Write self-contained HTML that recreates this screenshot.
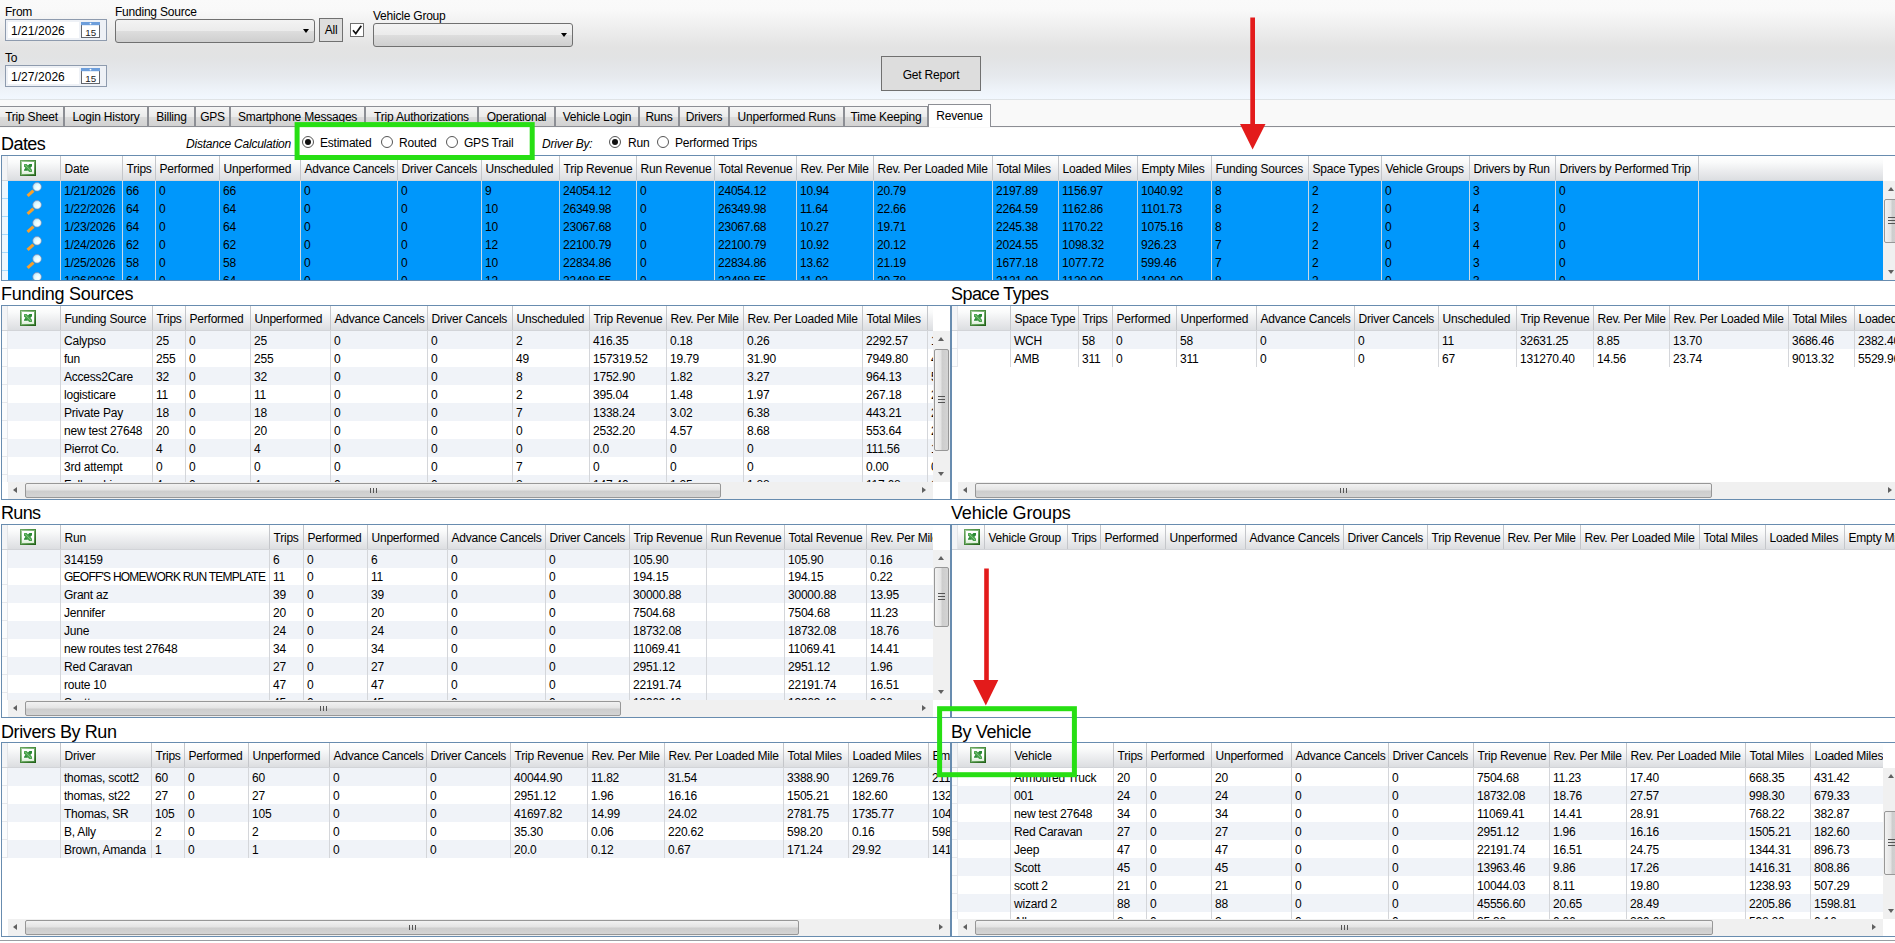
<!DOCTYPE html><html><head><meta charset="utf-8"><title>Revenue Report</title><style>
html,body{margin:0;padding:0;}
body{width:1895px;height:943px;overflow:hidden;background:#fff;position:relative;
 font-family:"Liberation Sans",sans-serif;font-size:12px;color:#000;letter-spacing:-0.22px;}
div,span{box-sizing:border-box;}
.abs{position:absolute;}
#top{position:absolute;left:0;top:0;width:1895px;height:99px;
 background:linear-gradient(to bottom,#fafafa 0px,#f9f9f9 9px,#f3f3f3 20px,#e3e3e3 47px,#e2e3e4 58px,#e6e9ed 76px,#eef3f9 90px,#f2f8ff 99px);}
#tabbg{position:absolute;left:0;top:99px;width:1895px;height:29px;background:#f9f9f9;border-top:1px solid #dfe3e6;}
#tabline{position:absolute;left:0;top:126px;width:1895px;height:1px;background:#8c8e94;}
.tab{position:absolute;top:106px;height:21px;border:1px solid #8c8e94;
 background:linear-gradient(to bottom,#f5f5f5 0%,#ebebeb 50%,#dcdcdc 51%,#d2d2d2 100%);
 line-height:21px;text-align:center;white-space:nowrap;overflow:hidden;font-size:12px;}
.tab.sel{top:104px;height:23px;background:#fff;border-bottom:none;line-height:22px;}
.lbl{position:absolute;white-space:nowrap;line-height:16px;font-size:12px;}
.ttl{position:absolute;white-space:nowrap;font-size:18px;line-height:20px;letter-spacing:-0.45px;}
.it{font-style:italic;}
.datebox{position:absolute;width:102px;height:22px;border:1px solid #8e9bae;background:#eef1f6;}
.datebox .tx{position:absolute;left:2px;top:2px;width:71px;height:16px;background:#fff;line-height:19px;padding-left:3px;font-size:12px;letter-spacing:0.05px;}
.cal{position:absolute;left:75px;top:2px;width:19px;height:16px;}
.combo{position:absolute;height:24px;border:1px solid #707070;border-radius:3px;
 background:linear-gradient(to bottom,#f3f3f3 0%,#ebebeb 50%,#dddddd 51%,#cfcfcf 100%);}
.combo:after{content:"";position:absolute;right:5.5px;top:9px;border:3.5px solid transparent;border-top:4px solid #000;border-bottom:none;}
.btn{position:absolute;border:1px solid #707070;background:#dddddd;text-align:center;font-size:12px;}
.chk{position:absolute;width:14px;height:14px;border:1px solid #707070;background:#fff;}
.radio{position:absolute;width:12px;height:12px;border:1px solid #555;border-radius:50%;background:#fff;}
.radio.on:after{content:"";position:absolute;left:2px;top:2px;width:6px;height:6px;border-radius:50%;background:#111;}

.grid{position:absolute;border:1px solid #688caf;background:#fff;overflow:hidden;}
.hdr{position:absolute;left:0;top:0;height:25px;overflow:hidden;
 background:linear-gradient(to bottom,#ffffff 0%,#fafbfb 25%,#ecedef 60%,#dcdee1 100%);border-bottom:1px solid #d2d4d8;}
.hc{position:absolute;top:0;height:24px;line-height:26px;padding-left:3.5px;white-space:nowrap;overflow:hidden;border-right:1px solid #c4c6ca;}
.rh{position:absolute;left:0;top:0;width:6px;height:24px;background:#f3f4f6;border-right:1px solid #e3e5e8;}
.row{position:absolute;left:0;height:18px;}
.row.alt{background:#f0f3f8;}
.row.selr{background:#0097fb;}
.row .rhc{position:absolute;left:0;top:0;width:6px;height:18px;background:#fbfcfd;border-right:1px solid #e6e8ec;border-bottom:1px solid #e6e8ec;}
.row.selr .rhc{background:#eef7fe;border-right:none;border-bottom:1px solid #a8dafb;}
.c{position:absolute;top:0;height:18px;line-height:21px;padding-left:3px;white-space:nowrap;overflow:hidden;border-right:1px solid #d4d6da;}
.selr .c{border-right:1px solid #c9d9e6;}
.vs{position:absolute;width:17px;background:#f0f0f0;}
.hs{position:absolute;height:17px;background:#f0f0f0;}
.thv{position:absolute;left:1px;width:15px;border:1px solid #979797;border-radius:2px;
 background:linear-gradient(to right,#f2f2f2 0%,#e4e4e4 45%,#cdcdcd 55%,#d4d4d4 100%);}
.thh{position:absolute;top:1px;height:15px;border:1px solid #979797;border-radius:2px;
 background:linear-gradient(to bottom,#f2f2f2 0%,#e4e4e4 45%,#cdcdcd 55%,#d4d4d4 100%);}
.gh{position:absolute;top:4px;width:7px;height:5px;background:linear-gradient(to right,#555 0,#555 1px,transparent 1px,transparent 3px,#555 3px,#555 4px,transparent 4px,transparent 6px,#555 6px,#555 7px);}
.gv{position:absolute;left:3px;width:7px;height:7px;background:linear-gradient(to bottom,#555 0,#555 1px,transparent 1px,transparent 3px,#555 3px,#555 4px,transparent 4px,transparent 6px,#555 6px,#555 7px);}
.ar{position:absolute;width:0;height:0;border:3.5px solid transparent;}
.ar.u{border-bottom:4px solid #606060;border-top:none;}
.ar.d{border-top:4px solid #606060;border-bottom:none;}
.ar.l{border-right:4px solid #606060;border-left:none;}
.ar.r{border-left:4px solid #606060;border-right:none;}
</style></head><body>
<svg width="0" height="0" style="position:absolute"><defs><linearGradient id="xg" x1="0" y1="0" x2="1" y2="1"><stop offset="0" stop-color="#6fa965"/><stop offset="0.5" stop-color="#468a3c"/><stop offset="1" stop-color="#1f5c16"/></linearGradient><linearGradient id="xr" x1="0" y1="0" x2="1" y2="1"><stop offset="0" stop-color="#a6cf9e"/><stop offset="0.5" stop-color="#79b070"/><stop offset="1" stop-color="#3f8236"/></linearGradient><linearGradient id="xw" x1="0" y1="0" x2="0" y2="1"><stop offset="0" stop-color="#ffffff"/><stop offset="0.6" stop-color="#ffffff"/><stop offset="1" stop-color="#dcefd8"/></linearGradient><radialGradient id="mg" cx="0.62" cy="0.62" r="0.75"><stop offset="0" stop-color="#ffffff"/><stop offset="0.55" stop-color="#dcfaff"/><stop offset="1" stop-color="#9fcdf2"/></radialGradient></defs></svg>
<div id="top"></div>
<div class="lbl" style="left:5px;top:4px">From</div>
<div class="datebox" style="left:5px;top:19px"><div class="tx">1/21/2026</div><svg class="cal" width="19" height="16" viewBox="0 0 19 16"><rect x="0.5" y="0.5" width="18" height="15" fill="#fff" stroke="#63666d"/><rect x="0" y="0" width="19" height="3.2" fill="#6d9edb"/><circle cx="9.5" cy="1.6" r="0.9" fill="#fff"/><text x="9.7" y="14.3" font-size="9.8" text-anchor="middle" font-family="Liberation Sans, sans-serif" fill="#222" letter-spacing="0">15</text></svg></div>
<div class="lbl" style="left:5px;top:50px">To</div>
<div class="datebox" style="left:5px;top:65px"><div class="tx">1/27/2026</div><svg class="cal" width="19" height="16" viewBox="0 0 19 16"><rect x="0.5" y="0.5" width="18" height="15" fill="#fff" stroke="#63666d"/><rect x="0" y="0" width="19" height="3.2" fill="#6d9edb"/><circle cx="9.5" cy="1.6" r="0.9" fill="#fff"/><text x="9.7" y="14.3" font-size="9.8" text-anchor="middle" font-family="Liberation Sans, sans-serif" fill="#222" letter-spacing="0">15</text></svg></div>
<div class="lbl" style="left:115px;top:4px">Funding Source</div>
<div class="combo" style="left:115px;top:19px;width:200px"></div>
<div class="btn" style="left:319px;top:18px;width:24px;height:24px;line-height:23px">All</div>
<div class="chk" style="left:350px;top:23px"><svg width="12" height="12" viewBox="0 0 12 12" style="position:absolute;left:0;top:0"><path d="M2 6.2 L4.8 9.5 L10.3 1.8" fill="none" stroke="#111" stroke-width="1.7"/></svg></div>
<div class="lbl" style="left:373px;top:8px">Vehicle Group</div>
<div class="combo" style="left:373px;top:23px;width:200px"></div>
<div class="btn" style="left:881px;top:56px;width:100px;height:35px;line-height:37px">Get Report</div>
<div id="tabbg"></div><div id="tabline"></div>
<div class="tab" style="left:-1px;width:65px">Trip Sheet</div>
<div class="tab" style="left:64px;width:84px">Login History</div>
<div class="tab" style="left:148px;width:47px">Billing</div>
<div class="tab" style="left:195px;width:35px">GPS</div>
<div class="tab" style="left:230px;width:135px">Smartphone Messages</div>
<div class="tab" style="left:365px;width:113px">Trip Authorizations</div>
<div class="tab" style="left:478px;width:77px">Operational</div>
<div class="tab" style="left:555px;width:84px">Vehicle Login</div>
<div class="tab" style="left:639px;width:40px">Runs</div>
<div class="tab" style="left:679px;width:50px">Drivers</div>
<div class="tab" style="left:729px;width:115px">Unperformed Runs</div>
<div class="tab" style="left:844px;width:84px">Time Keeping</div>
<div class="tab sel" style="left:928px;width:63px">Revenue</div>
<div class="ttl" style="left:1px;top:134px;letter-spacing:-0.55px">Dates</div>
<div class="lbl it" style="left:186px;top:136px">Distance Calculation</div>
<div class="radio on" style="left:302px;top:136px"></div><div class="lbl" style="left:320px;top:135px">Estimated</div>
<div class="radio" style="left:381px;top:136px"></div><div class="lbl" style="left:399px;top:135px">Routed</div>
<div class="radio" style="left:446px;top:136px"></div><div class="lbl" style="left:464px;top:135px">GPS Trail</div>
<div class="lbl it" style="left:542px;top:136px">Driver By:</div>
<div class="radio on" style="left:609px;top:136px"></div><div class="lbl" style="left:628px;top:135px">Run</div>
<div class="radio" style="left:657px;top:136px"></div><div class="lbl" style="left:675px;top:135px">Performed Trips</div>
<div class="grid" style="left:1px;top:155px;width:1901px;height:126px">
<div class="abs" style="left:0;top:25px;width:1881px;height:99px;overflow:hidden">
<div class="row selr" style="top:0px;width:1881px"><div class="rhc" style="width:6px"></div>
<div class="c" style="left:6px;width:53px"><svg class="abs" style="left:17px;top:0px" width="18" height="18" viewBox="0 0 18 18"><path d="M3.7 13.9 L7.3 10.6" stroke="#f9a02b" stroke-width="3.1" stroke-linecap="square"/><circle cx="12.05" cy="5.8" r="4.3" fill="url(#mg)" stroke="#8f8aa8" stroke-width="0.6"/></svg></div>
<div class="c" style="left:59px;width:62px">1/21/2026</div>
<div class="c" style="left:121px;width:33px">66</div>
<div class="c" style="left:154px;width:64px">0</div>
<div class="c" style="left:218px;width:81px">66</div>
<div class="c" style="left:299px;width:97px">0</div>
<div class="c" style="left:396px;width:84px">0</div>
<div class="c" style="left:480px;width:78px">9</div>
<div class="c" style="left:558px;width:77px">24054.12</div>
<div class="c" style="left:635px;width:78px">0</div>
<div class="c" style="left:713px;width:82px">24054.12</div>
<div class="c" style="left:795px;width:77px">10.94</div>
<div class="c" style="left:872px;width:119px">20.79</div>
<div class="c" style="left:991px;width:66px">2197.89</div>
<div class="c" style="left:1057px;width:79px">1156.97</div>
<div class="c" style="left:1136px;width:74px">1040.92</div>
<div class="c" style="left:1210px;width:97px">8</div>
<div class="c" style="left:1307px;width:73px">2</div>
<div class="c" style="left:1380px;width:88px">0</div>
<div class="c" style="left:1468px;width:86px">3</div>
<div class="c" style="left:1554px;width:143px">0</div>
</div>
<div class="row selr" style="top:18px;width:1881px"><div class="rhc" style="width:6px"></div>
<div class="c" style="left:6px;width:53px"><svg class="abs" style="left:17px;top:0px" width="18" height="18" viewBox="0 0 18 18"><path d="M3.7 13.9 L7.3 10.6" stroke="#f9a02b" stroke-width="3.1" stroke-linecap="square"/><circle cx="12.05" cy="5.8" r="4.3" fill="url(#mg)" stroke="#8f8aa8" stroke-width="0.6"/></svg></div>
<div class="c" style="left:59px;width:62px">1/22/2026</div>
<div class="c" style="left:121px;width:33px">64</div>
<div class="c" style="left:154px;width:64px">0</div>
<div class="c" style="left:218px;width:81px">64</div>
<div class="c" style="left:299px;width:97px">0</div>
<div class="c" style="left:396px;width:84px">0</div>
<div class="c" style="left:480px;width:78px">10</div>
<div class="c" style="left:558px;width:77px">26349.98</div>
<div class="c" style="left:635px;width:78px">0</div>
<div class="c" style="left:713px;width:82px">26349.98</div>
<div class="c" style="left:795px;width:77px">11.64</div>
<div class="c" style="left:872px;width:119px">22.66</div>
<div class="c" style="left:991px;width:66px">2264.59</div>
<div class="c" style="left:1057px;width:79px">1162.86</div>
<div class="c" style="left:1136px;width:74px">1101.73</div>
<div class="c" style="left:1210px;width:97px">8</div>
<div class="c" style="left:1307px;width:73px">2</div>
<div class="c" style="left:1380px;width:88px">0</div>
<div class="c" style="left:1468px;width:86px">4</div>
<div class="c" style="left:1554px;width:143px">0</div>
</div>
<div class="row selr" style="top:36px;width:1881px"><div class="rhc" style="width:6px"></div>
<div class="c" style="left:6px;width:53px"><svg class="abs" style="left:17px;top:0px" width="18" height="18" viewBox="0 0 18 18"><path d="M3.7 13.9 L7.3 10.6" stroke="#f9a02b" stroke-width="3.1" stroke-linecap="square"/><circle cx="12.05" cy="5.8" r="4.3" fill="url(#mg)" stroke="#8f8aa8" stroke-width="0.6"/></svg></div>
<div class="c" style="left:59px;width:62px">1/23/2026</div>
<div class="c" style="left:121px;width:33px">64</div>
<div class="c" style="left:154px;width:64px">0</div>
<div class="c" style="left:218px;width:81px">64</div>
<div class="c" style="left:299px;width:97px">0</div>
<div class="c" style="left:396px;width:84px">0</div>
<div class="c" style="left:480px;width:78px">10</div>
<div class="c" style="left:558px;width:77px">23067.68</div>
<div class="c" style="left:635px;width:78px">0</div>
<div class="c" style="left:713px;width:82px">23067.68</div>
<div class="c" style="left:795px;width:77px">10.27</div>
<div class="c" style="left:872px;width:119px">19.71</div>
<div class="c" style="left:991px;width:66px">2245.38</div>
<div class="c" style="left:1057px;width:79px">1170.22</div>
<div class="c" style="left:1136px;width:74px">1075.16</div>
<div class="c" style="left:1210px;width:97px">8</div>
<div class="c" style="left:1307px;width:73px">2</div>
<div class="c" style="left:1380px;width:88px">0</div>
<div class="c" style="left:1468px;width:86px">3</div>
<div class="c" style="left:1554px;width:143px">0</div>
</div>
<div class="row selr" style="top:54px;width:1881px"><div class="rhc" style="width:6px"></div>
<div class="c" style="left:6px;width:53px"><svg class="abs" style="left:17px;top:0px" width="18" height="18" viewBox="0 0 18 18"><path d="M3.7 13.9 L7.3 10.6" stroke="#f9a02b" stroke-width="3.1" stroke-linecap="square"/><circle cx="12.05" cy="5.8" r="4.3" fill="url(#mg)" stroke="#8f8aa8" stroke-width="0.6"/></svg></div>
<div class="c" style="left:59px;width:62px">1/24/2026</div>
<div class="c" style="left:121px;width:33px">62</div>
<div class="c" style="left:154px;width:64px">0</div>
<div class="c" style="left:218px;width:81px">62</div>
<div class="c" style="left:299px;width:97px">0</div>
<div class="c" style="left:396px;width:84px">0</div>
<div class="c" style="left:480px;width:78px">12</div>
<div class="c" style="left:558px;width:77px">22100.79</div>
<div class="c" style="left:635px;width:78px">0</div>
<div class="c" style="left:713px;width:82px">22100.79</div>
<div class="c" style="left:795px;width:77px">10.92</div>
<div class="c" style="left:872px;width:119px">20.12</div>
<div class="c" style="left:991px;width:66px">2024.55</div>
<div class="c" style="left:1057px;width:79px">1098.32</div>
<div class="c" style="left:1136px;width:74px">926.23</div>
<div class="c" style="left:1210px;width:97px">7</div>
<div class="c" style="left:1307px;width:73px">2</div>
<div class="c" style="left:1380px;width:88px">0</div>
<div class="c" style="left:1468px;width:86px">4</div>
<div class="c" style="left:1554px;width:143px">0</div>
</div>
<div class="row selr" style="top:72px;width:1881px"><div class="rhc" style="width:6px"></div>
<div class="c" style="left:6px;width:53px"><svg class="abs" style="left:17px;top:0px" width="18" height="18" viewBox="0 0 18 18"><path d="M3.7 13.9 L7.3 10.6" stroke="#f9a02b" stroke-width="3.1" stroke-linecap="square"/><circle cx="12.05" cy="5.8" r="4.3" fill="url(#mg)" stroke="#8f8aa8" stroke-width="0.6"/></svg></div>
<div class="c" style="left:59px;width:62px">1/25/2026</div>
<div class="c" style="left:121px;width:33px">58</div>
<div class="c" style="left:154px;width:64px">0</div>
<div class="c" style="left:218px;width:81px">58</div>
<div class="c" style="left:299px;width:97px">0</div>
<div class="c" style="left:396px;width:84px">0</div>
<div class="c" style="left:480px;width:78px">10</div>
<div class="c" style="left:558px;width:77px">22834.86</div>
<div class="c" style="left:635px;width:78px">0</div>
<div class="c" style="left:713px;width:82px">22834.86</div>
<div class="c" style="left:795px;width:77px">13.62</div>
<div class="c" style="left:872px;width:119px">21.19</div>
<div class="c" style="left:991px;width:66px">1677.18</div>
<div class="c" style="left:1057px;width:79px">1077.72</div>
<div class="c" style="left:1136px;width:74px">599.46</div>
<div class="c" style="left:1210px;width:97px">7</div>
<div class="c" style="left:1307px;width:73px">2</div>
<div class="c" style="left:1380px;width:88px">0</div>
<div class="c" style="left:1468px;width:86px">3</div>
<div class="c" style="left:1554px;width:143px">0</div>
</div>
<div class="row selr" style="top:90px;width:1881px"><div class="rhc" style="width:6px"></div>
<div class="c" style="left:6px;width:53px"><svg class="abs" style="left:17px;top:0px" width="18" height="18" viewBox="0 0 18 18"><path d="M3.7 13.9 L7.3 10.6" stroke="#f9a02b" stroke-width="3.1" stroke-linecap="square"/><circle cx="12.05" cy="5.8" r="4.3" fill="url(#mg)" stroke="#8f8aa8" stroke-width="0.6"/></svg></div>
<div class="c" style="left:59px;width:62px">1/26/2026</div>
<div class="c" style="left:121px;width:33px">64</div>
<div class="c" style="left:154px;width:64px">0</div>
<div class="c" style="left:218px;width:81px">64</div>
<div class="c" style="left:299px;width:97px">0</div>
<div class="c" style="left:396px;width:84px">0</div>
<div class="c" style="left:480px;width:78px">12</div>
<div class="c" style="left:558px;width:77px">22488.55</div>
<div class="c" style="left:635px;width:78px">0</div>
<div class="c" style="left:713px;width:82px">22488.55</div>
<div class="c" style="left:795px;width:77px">11.02</div>
<div class="c" style="left:872px;width:119px">20.78</div>
<div class="c" style="left:991px;width:66px">2121.09</div>
<div class="c" style="left:1057px;width:79px">1120.09</div>
<div class="c" style="left:1136px;width:74px">1001.00</div>
<div class="c" style="left:1210px;width:97px">8</div>
<div class="c" style="left:1307px;width:73px">2</div>
<div class="c" style="left:1380px;width:88px">0</div>
<div class="c" style="left:1468px;width:86px">3</div>
<div class="c" style="left:1554px;width:143px">0</div>
</div>
</div>
<div class="hdr" style="width:1881px">
<div class="rh" style="width:6px"></div>
<div class="hc" style="left:6px;width:53px;padding:0"><svg class="abs" style="left:12px;top:4px" width="16" height="16" viewBox="0 0 16 16"><rect x="0" y="0" width="16" height="16" fill="url(#xg)"/><rect x="1" y="1" width="14" height="14" fill="url(#xr)"/><rect x="2" y="2" width="12" height="12" fill="url(#xw)"/><path d="M9.4 4 H12 V6.2 L7.4 10.8 H4 V9.4 Z" fill="#2b8a35"/><path d="M4 4 H6.6 L12 9.4 V12 H9.2 L4 6.4 Z" fill="#4aa24c"/><path d="M4.8 4.6 L11.2 11.2" stroke="#86c886" stroke-width="0.9"/></svg></div>
<div class="hc" style="left:59px;width:62px">Date</div>
<div class="hc" style="left:121px;width:33px">Trips</div>
<div class="hc" style="left:154px;width:64px">Performed</div>
<div class="hc" style="left:218px;width:81px">Unperformed</div>
<div class="hc" style="left:299px;width:97px">Advance Cancels</div>
<div class="hc" style="left:396px;width:84px">Driver Cancels</div>
<div class="hc" style="left:480px;width:78px">Unscheduled</div>
<div class="hc" style="left:558px;width:77px">Trip Revenue</div>
<div class="hc" style="left:635px;width:78px">Run Revenue</div>
<div class="hc" style="left:713px;width:82px">Total Revenue</div>
<div class="hc" style="left:795px;width:77px">Rev. Per Mile</div>
<div class="hc" style="left:872px;width:119px">Rev. Per Loaded Mile</div>
<div class="hc" style="left:991px;width:66px">Total Miles</div>
<div class="hc" style="left:1057px;width:79px">Loaded Miles</div>
<div class="hc" style="left:1136px;width:74px">Empty Miles</div>
<div class="hc" style="left:1210px;width:97px">Funding Sources</div>
<div class="hc" style="left:1307px;width:73px">Space Types</div>
<div class="hc" style="left:1380px;width:88px">Vehicle Groups</div>
<div class="hc" style="left:1468px;width:86px">Drivers by Run</div>
<div class="hc" style="left:1554px;width:143px">Drivers by Performed Trip</div>
</div>
<div class="vs" style="left:1881px;top:25px;height:99px">
<div class="ar u" style="left:5px;top:6px"></div>
<div class="ar d" style="left:5px;top:89px"></div>
<div class="thv" style="top:18px;height:44px"><div class="gv" style="top:17px"></div></div>
</div>
</div>
<div class="ttl" style="left:1px;top:284px;letter-spacing:-0.26px">Funding Sources</div>
<div class="grid" style="left:1px;top:305px;width:950px;height:195px">
<div class="abs" style="left:0;top:25px;width:931px;height:151px;overflow:hidden">
<div class="row alt" style="top:0px;width:1004px"><div class="rhc" style="width:6px"></div>
<div class="c" style="left:6px;width:53px"></div>
<div class="c" style="left:59px;width:92px">Calypso</div>
<div class="c" style="left:151px;width:33px">25</div>
<div class="c" style="left:184px;width:65px">0</div>
<div class="c" style="left:249px;width:80px">25</div>
<div class="c" style="left:329px;width:97px">0</div>
<div class="c" style="left:426px;width:85px">0</div>
<div class="c" style="left:511px;width:77px">2</div>
<div class="c" style="left:588px;width:77px">416.35</div>
<div class="c" style="left:665px;width:77px">0.18</div>
<div class="c" style="left:742px;width:119px">0.26</div>
<div class="c" style="left:861px;width:65px">2292.57</div>
<div class="c" style="left:926px;width:79px">1</div>
</div>
<div class="row" style="top:18px;width:1004px"><div class="rhc" style="width:6px"></div>
<div class="c" style="left:6px;width:53px"></div>
<div class="c" style="left:59px;width:92px">fun</div>
<div class="c" style="left:151px;width:33px">255</div>
<div class="c" style="left:184px;width:65px">0</div>
<div class="c" style="left:249px;width:80px">255</div>
<div class="c" style="left:329px;width:97px">0</div>
<div class="c" style="left:426px;width:85px">0</div>
<div class="c" style="left:511px;width:77px">49</div>
<div class="c" style="left:588px;width:77px">157319.52</div>
<div class="c" style="left:665px;width:77px">19.79</div>
<div class="c" style="left:742px;width:119px">31.90</div>
<div class="c" style="left:861px;width:65px">7949.80</div>
<div class="c" style="left:926px;width:79px">4</div>
</div>
<div class="row alt" style="top:36px;width:1004px"><div class="rhc" style="width:6px"></div>
<div class="c" style="left:6px;width:53px"></div>
<div class="c" style="left:59px;width:92px">Access2Care</div>
<div class="c" style="left:151px;width:33px">32</div>
<div class="c" style="left:184px;width:65px">0</div>
<div class="c" style="left:249px;width:80px">32</div>
<div class="c" style="left:329px;width:97px">0</div>
<div class="c" style="left:426px;width:85px">0</div>
<div class="c" style="left:511px;width:77px">8</div>
<div class="c" style="left:588px;width:77px">1752.90</div>
<div class="c" style="left:665px;width:77px">1.82</div>
<div class="c" style="left:742px;width:119px">3.27</div>
<div class="c" style="left:861px;width:65px">964.13</div>
<div class="c" style="left:926px;width:79px">5</div>
</div>
<div class="row" style="top:54px;width:1004px"><div class="rhc" style="width:6px"></div>
<div class="c" style="left:6px;width:53px"></div>
<div class="c" style="left:59px;width:92px">logisticare</div>
<div class="c" style="left:151px;width:33px">11</div>
<div class="c" style="left:184px;width:65px">0</div>
<div class="c" style="left:249px;width:80px">11</div>
<div class="c" style="left:329px;width:97px">0</div>
<div class="c" style="left:426px;width:85px">0</div>
<div class="c" style="left:511px;width:77px">2</div>
<div class="c" style="left:588px;width:77px">395.04</div>
<div class="c" style="left:665px;width:77px">1.48</div>
<div class="c" style="left:742px;width:119px">1.97</div>
<div class="c" style="left:861px;width:65px">267.18</div>
<div class="c" style="left:926px;width:79px">2</div>
</div>
<div class="row alt" style="top:72px;width:1004px"><div class="rhc" style="width:6px"></div>
<div class="c" style="left:6px;width:53px"></div>
<div class="c" style="left:59px;width:92px">Private Pay</div>
<div class="c" style="left:151px;width:33px">18</div>
<div class="c" style="left:184px;width:65px">0</div>
<div class="c" style="left:249px;width:80px">18</div>
<div class="c" style="left:329px;width:97px">0</div>
<div class="c" style="left:426px;width:85px">0</div>
<div class="c" style="left:511px;width:77px">7</div>
<div class="c" style="left:588px;width:77px">1338.24</div>
<div class="c" style="left:665px;width:77px">3.02</div>
<div class="c" style="left:742px;width:119px">6.38</div>
<div class="c" style="left:861px;width:65px">443.21</div>
<div class="c" style="left:926px;width:79px">2</div>
</div>
<div class="row" style="top:90px;width:1004px"><div class="rhc" style="width:6px"></div>
<div class="c" style="left:6px;width:53px"></div>
<div class="c" style="left:59px;width:92px">new test 27648</div>
<div class="c" style="left:151px;width:33px">20</div>
<div class="c" style="left:184px;width:65px">0</div>
<div class="c" style="left:249px;width:80px">20</div>
<div class="c" style="left:329px;width:97px">0</div>
<div class="c" style="left:426px;width:85px">0</div>
<div class="c" style="left:511px;width:77px">0</div>
<div class="c" style="left:588px;width:77px">2532.20</div>
<div class="c" style="left:665px;width:77px">4.57</div>
<div class="c" style="left:742px;width:119px">8.68</div>
<div class="c" style="left:861px;width:65px">553.64</div>
<div class="c" style="left:926px;width:79px">2</div>
</div>
<div class="row alt" style="top:108px;width:1004px"><div class="rhc" style="width:6px"></div>
<div class="c" style="left:6px;width:53px"></div>
<div class="c" style="left:59px;width:92px">Pierrot Co.</div>
<div class="c" style="left:151px;width:33px">4</div>
<div class="c" style="left:184px;width:65px">0</div>
<div class="c" style="left:249px;width:80px">4</div>
<div class="c" style="left:329px;width:97px">0</div>
<div class="c" style="left:426px;width:85px">0</div>
<div class="c" style="left:511px;width:77px">0</div>
<div class="c" style="left:588px;width:77px">0.0</div>
<div class="c" style="left:665px;width:77px">0</div>
<div class="c" style="left:742px;width:119px">0</div>
<div class="c" style="left:861px;width:65px">111.56</div>
<div class="c" style="left:926px;width:79px">1</div>
</div>
<div class="row" style="top:126px;width:1004px"><div class="rhc" style="width:6px"></div>
<div class="c" style="left:6px;width:53px"></div>
<div class="c" style="left:59px;width:92px">3rd attempt</div>
<div class="c" style="left:151px;width:33px">0</div>
<div class="c" style="left:184px;width:65px">0</div>
<div class="c" style="left:249px;width:80px">0</div>
<div class="c" style="left:329px;width:97px">0</div>
<div class="c" style="left:426px;width:85px">0</div>
<div class="c" style="left:511px;width:77px">7</div>
<div class="c" style="left:588px;width:77px">0</div>
<div class="c" style="left:665px;width:77px">0</div>
<div class="c" style="left:742px;width:119px">0</div>
<div class="c" style="left:861px;width:65px">0.00</div>
<div class="c" style="left:926px;width:79px">0</div>
</div>
<div class="row alt" style="top:144px;width:1004px"><div class="rhc" style="width:6px"></div>
<div class="c" style="left:6px;width:53px"></div>
<div class="c" style="left:59px;width:92px">Fellowship</div>
<div class="c" style="left:151px;width:33px">4</div>
<div class="c" style="left:184px;width:65px">0</div>
<div class="c" style="left:249px;width:80px">4</div>
<div class="c" style="left:329px;width:97px">0</div>
<div class="c" style="left:426px;width:85px">0</div>
<div class="c" style="left:511px;width:77px">2</div>
<div class="c" style="left:588px;width:77px">147.40</div>
<div class="c" style="left:665px;width:77px">1.25</div>
<div class="c" style="left:742px;width:119px">1.88</div>
<div class="c" style="left:861px;width:65px">117.68</div>
<div class="c" style="left:926px;width:79px">1</div>
</div>
</div>
<div class="hdr" style="width:931px">
<div class="rh" style="width:6px"></div>
<div class="hc" style="left:6px;width:53px;padding:0"><svg class="abs" style="left:12px;top:4px" width="16" height="16" viewBox="0 0 16 16"><rect x="0" y="0" width="16" height="16" fill="url(#xg)"/><rect x="1" y="1" width="14" height="14" fill="url(#xr)"/><rect x="2" y="2" width="12" height="12" fill="url(#xw)"/><path d="M9.4 4 H12 V6.2 L7.4 10.8 H4 V9.4 Z" fill="#2b8a35"/><path d="M4 4 H6.6 L12 9.4 V12 H9.2 L4 6.4 Z" fill="#4aa24c"/><path d="M4.8 4.6 L11.2 11.2" stroke="#86c886" stroke-width="0.9"/></svg></div>
<div class="hc" style="left:59px;width:92px">Funding Source</div>
<div class="hc" style="left:151px;width:33px">Trips</div>
<div class="hc" style="left:184px;width:65px">Performed</div>
<div class="hc" style="left:249px;width:80px">Unperformed</div>
<div class="hc" style="left:329px;width:97px">Advance Cancels</div>
<div class="hc" style="left:426px;width:85px">Driver Cancels</div>
<div class="hc" style="left:511px;width:77px">Unscheduled</div>
<div class="hc" style="left:588px;width:77px">Trip Revenue</div>
<div class="hc" style="left:665px;width:77px">Rev. Per Mile</div>
<div class="hc" style="left:742px;width:119px">Rev. Per Loaded Mile</div>
<div class="hc" style="left:861px;width:65px">Total Miles</div>
<div class="hc" style="left:926px;width:79px"></div>
</div>
<div class="vs" style="left:931px;top:25px;height:151px">
<div class="ar u" style="left:5px;top:6px"></div>
<div class="ar d" style="left:5px;top:141px"></div>
<div class="thv" style="top:18px;height:102px"><div class="gv" style="top:46px"></div></div>
</div>
<div class="hs" style="left:6px;top:176px;width:925px">
<div class="ar l" style="left:5px;top:5px"></div>
<div class="ar r" style="left:914px;top:5px"></div>
<div class="thh" style="left:17px;width:696px"><div class="gh" style="left:344px"></div></div>
</div>
</div>
<div class="ttl" style="left:951px;top:284px;letter-spacing:-0.57px">Space Types</div>
<div class="grid" style="left:951px;top:305px;width:950px;height:195px">
<div class="abs" style="left:0;top:25px;width:949px;height:151px;overflow:hidden">
<div class="row alt" style="top:0px;width:981px"><div class="rhc" style="width:6px"></div>
<div class="c" style="left:6px;width:53px"></div>
<div class="c" style="left:59px;width:68px">WCH</div>
<div class="c" style="left:127px;width:34px">58</div>
<div class="c" style="left:161px;width:64px">0</div>
<div class="c" style="left:225px;width:80px">58</div>
<div class="c" style="left:305px;width:98px">0</div>
<div class="c" style="left:403px;width:84px">0</div>
<div class="c" style="left:487px;width:78px">11</div>
<div class="c" style="left:565px;width:77px">32631.25</div>
<div class="c" style="left:642px;width:76px">8.85</div>
<div class="c" style="left:718px;width:119px">13.70</div>
<div class="c" style="left:837px;width:66px">3686.46</div>
<div class="c" style="left:903px;width:79px">2382.40</div>
</div>
<div class="row" style="top:18px;width:981px"><div class="rhc" style="width:6px"></div>
<div class="c" style="left:6px;width:53px"></div>
<div class="c" style="left:59px;width:68px">AMB</div>
<div class="c" style="left:127px;width:34px">311</div>
<div class="c" style="left:161px;width:64px">0</div>
<div class="c" style="left:225px;width:80px">311</div>
<div class="c" style="left:305px;width:98px">0</div>
<div class="c" style="left:403px;width:84px">0</div>
<div class="c" style="left:487px;width:78px">67</div>
<div class="c" style="left:565px;width:77px">131270.40</div>
<div class="c" style="left:642px;width:76px">14.56</div>
<div class="c" style="left:718px;width:119px">23.74</div>
<div class="c" style="left:837px;width:66px">9013.32</div>
<div class="c" style="left:903px;width:79px">5529.96</div>
</div>
</div>
<div class="hdr" style="width:949px">
<div class="rh" style="width:6px"></div>
<div class="hc" style="left:6px;width:53px;padding:0"><svg class="abs" style="left:12px;top:4px" width="16" height="16" viewBox="0 0 16 16"><rect x="0" y="0" width="16" height="16" fill="url(#xg)"/><rect x="1" y="1" width="14" height="14" fill="url(#xr)"/><rect x="2" y="2" width="12" height="12" fill="url(#xw)"/><path d="M9.4 4 H12 V6.2 L7.4 10.8 H4 V9.4 Z" fill="#2b8a35"/><path d="M4 4 H6.6 L12 9.4 V12 H9.2 L4 6.4 Z" fill="#4aa24c"/><path d="M4.8 4.6 L11.2 11.2" stroke="#86c886" stroke-width="0.9"/></svg></div>
<div class="hc" style="left:59px;width:68px">Space Type</div>
<div class="hc" style="left:127px;width:34px">Trips</div>
<div class="hc" style="left:161px;width:64px">Performed</div>
<div class="hc" style="left:225px;width:80px">Unperformed</div>
<div class="hc" style="left:305px;width:98px">Advance Cancels</div>
<div class="hc" style="left:403px;width:84px">Driver Cancels</div>
<div class="hc" style="left:487px;width:78px">Unscheduled</div>
<div class="hc" style="left:565px;width:77px">Trip Revenue</div>
<div class="hc" style="left:642px;width:76px">Rev. Per Mile</div>
<div class="hc" style="left:718px;width:119px">Rev. Per Loaded Mile</div>
<div class="hc" style="left:837px;width:66px">Total Miles</div>
<div class="hc" style="left:903px;width:79px">Loaded Miles</div>
</div>
<div class="hs" style="left:6px;top:176px;width:943px">
<div class="ar l" style="left:5px;top:5px"></div>
<div class="ar r" style="left:930px;top:5px"></div>
<div class="thh" style="left:17px;width:737px"><div class="gh" style="left:364px"></div></div>
</div>
</div>
<div class="ttl" style="left:1px;top:503px;letter-spacing:-0.68px">Runs</div>
<div class="grid" style="left:1px;top:524px;width:950px;height:194px">
<div class="abs" style="left:0;top:25px;width:931px;height:150px;overflow:hidden">
<div class="row alt" style="top:0px;width:941px"><div class="rhc" style="width:6px"></div>
<div class="c" style="left:6px;width:53px"></div>
<div class="c" style="left:59px;width:209px">314159</div>
<div class="c" style="left:268px;width:34px">6</div>
<div class="c" style="left:302px;width:64px">0</div>
<div class="c" style="left:366px;width:80px">6</div>
<div class="c" style="left:446px;width:98px">0</div>
<div class="c" style="left:544px;width:84px">0</div>
<div class="c" style="left:628px;width:77px">105.90</div>
<div class="c" style="left:705px;width:78px"></div>
<div class="c" style="left:783px;width:82px">105.90</div>
<div class="c" style="left:865px;width:77px">0.16</div>
</div>
<div class="row" style="top:17px;width:941px"><div class="rhc" style="width:6px"></div>
<div class="c" style="left:6px;width:53px"></div>
<div class="c" style="left:59px;width:209px"><span style="letter-spacing:-0.76px">GEOFF'S HOMEWORK RUN TEMPLATE</span></div>
<div class="c" style="left:268px;width:34px">11</div>
<div class="c" style="left:302px;width:64px">0</div>
<div class="c" style="left:366px;width:80px">11</div>
<div class="c" style="left:446px;width:98px">0</div>
<div class="c" style="left:544px;width:84px">0</div>
<div class="c" style="left:628px;width:77px">194.15</div>
<div class="c" style="left:705px;width:78px"></div>
<div class="c" style="left:783px;width:82px">194.15</div>
<div class="c" style="left:865px;width:77px">0.22</div>
</div>
<div class="row alt" style="top:35px;width:941px"><div class="rhc" style="width:6px"></div>
<div class="c" style="left:6px;width:53px"></div>
<div class="c" style="left:59px;width:209px">Grant az</div>
<div class="c" style="left:268px;width:34px">39</div>
<div class="c" style="left:302px;width:64px">0</div>
<div class="c" style="left:366px;width:80px">39</div>
<div class="c" style="left:446px;width:98px">0</div>
<div class="c" style="left:544px;width:84px">0</div>
<div class="c" style="left:628px;width:77px">30000.88</div>
<div class="c" style="left:705px;width:78px"></div>
<div class="c" style="left:783px;width:82px">30000.88</div>
<div class="c" style="left:865px;width:77px">13.95</div>
</div>
<div class="row" style="top:53px;width:941px"><div class="rhc" style="width:6px"></div>
<div class="c" style="left:6px;width:53px"></div>
<div class="c" style="left:59px;width:209px">Jennifer</div>
<div class="c" style="left:268px;width:34px">20</div>
<div class="c" style="left:302px;width:64px">0</div>
<div class="c" style="left:366px;width:80px">20</div>
<div class="c" style="left:446px;width:98px">0</div>
<div class="c" style="left:544px;width:84px">0</div>
<div class="c" style="left:628px;width:77px">7504.68</div>
<div class="c" style="left:705px;width:78px"></div>
<div class="c" style="left:783px;width:82px">7504.68</div>
<div class="c" style="left:865px;width:77px">11.23</div>
</div>
<div class="row alt" style="top:71px;width:941px"><div class="rhc" style="width:6px"></div>
<div class="c" style="left:6px;width:53px"></div>
<div class="c" style="left:59px;width:209px">June</div>
<div class="c" style="left:268px;width:34px">24</div>
<div class="c" style="left:302px;width:64px">0</div>
<div class="c" style="left:366px;width:80px">24</div>
<div class="c" style="left:446px;width:98px">0</div>
<div class="c" style="left:544px;width:84px">0</div>
<div class="c" style="left:628px;width:77px">18732.08</div>
<div class="c" style="left:705px;width:78px"></div>
<div class="c" style="left:783px;width:82px">18732.08</div>
<div class="c" style="left:865px;width:77px">18.76</div>
</div>
<div class="row" style="top:89px;width:941px"><div class="rhc" style="width:6px"></div>
<div class="c" style="left:6px;width:53px"></div>
<div class="c" style="left:59px;width:209px">new routes test 27648</div>
<div class="c" style="left:268px;width:34px">34</div>
<div class="c" style="left:302px;width:64px">0</div>
<div class="c" style="left:366px;width:80px">34</div>
<div class="c" style="left:446px;width:98px">0</div>
<div class="c" style="left:544px;width:84px">0</div>
<div class="c" style="left:628px;width:77px">11069.41</div>
<div class="c" style="left:705px;width:78px"></div>
<div class="c" style="left:783px;width:82px">11069.41</div>
<div class="c" style="left:865px;width:77px">14.41</div>
</div>
<div class="row alt" style="top:107px;width:941px"><div class="rhc" style="width:6px"></div>
<div class="c" style="left:6px;width:53px"></div>
<div class="c" style="left:59px;width:209px">Red Caravan</div>
<div class="c" style="left:268px;width:34px">27</div>
<div class="c" style="left:302px;width:64px">0</div>
<div class="c" style="left:366px;width:80px">27</div>
<div class="c" style="left:446px;width:98px">0</div>
<div class="c" style="left:544px;width:84px">0</div>
<div class="c" style="left:628px;width:77px">2951.12</div>
<div class="c" style="left:705px;width:78px"></div>
<div class="c" style="left:783px;width:82px">2951.12</div>
<div class="c" style="left:865px;width:77px">1.96</div>
</div>
<div class="row" style="top:125px;width:941px"><div class="rhc" style="width:6px"></div>
<div class="c" style="left:6px;width:53px"></div>
<div class="c" style="left:59px;width:209px">route 10</div>
<div class="c" style="left:268px;width:34px">47</div>
<div class="c" style="left:302px;width:64px">0</div>
<div class="c" style="left:366px;width:80px">47</div>
<div class="c" style="left:446px;width:98px">0</div>
<div class="c" style="left:544px;width:84px">0</div>
<div class="c" style="left:628px;width:77px">22191.74</div>
<div class="c" style="left:705px;width:78px"></div>
<div class="c" style="left:783px;width:82px">22191.74</div>
<div class="c" style="left:865px;width:77px">16.51</div>
</div>
<div class="row alt" style="top:143px;width:941px"><div class="rhc" style="width:6px"></div>
<div class="c" style="left:6px;width:53px"></div>
<div class="c" style="left:59px;width:209px">Scott</div>
<div class="c" style="left:268px;width:34px">45</div>
<div class="c" style="left:302px;width:64px">0</div>
<div class="c" style="left:366px;width:80px">45</div>
<div class="c" style="left:446px;width:98px">0</div>
<div class="c" style="left:544px;width:84px">0</div>
<div class="c" style="left:628px;width:77px">13963.46</div>
<div class="c" style="left:705px;width:78px"></div>
<div class="c" style="left:783px;width:82px">13963.46</div>
<div class="c" style="left:865px;width:77px">9.86</div>
</div>
</div>
<div class="hdr" style="width:931px">
<div class="rh" style="width:6px"></div>
<div class="hc" style="left:6px;width:53px;padding:0"><svg class="abs" style="left:12px;top:4px" width="16" height="16" viewBox="0 0 16 16"><rect x="0" y="0" width="16" height="16" fill="url(#xg)"/><rect x="1" y="1" width="14" height="14" fill="url(#xr)"/><rect x="2" y="2" width="12" height="12" fill="url(#xw)"/><path d="M9.4 4 H12 V6.2 L7.4 10.8 H4 V9.4 Z" fill="#2b8a35"/><path d="M4 4 H6.6 L12 9.4 V12 H9.2 L4 6.4 Z" fill="#4aa24c"/><path d="M4.8 4.6 L11.2 11.2" stroke="#86c886" stroke-width="0.9"/></svg></div>
<div class="hc" style="left:59px;width:209px">Run</div>
<div class="hc" style="left:268px;width:34px">Trips</div>
<div class="hc" style="left:302px;width:64px">Performed</div>
<div class="hc" style="left:366px;width:80px">Unperformed</div>
<div class="hc" style="left:446px;width:98px">Advance Cancels</div>
<div class="hc" style="left:544px;width:84px">Driver Cancels</div>
<div class="hc" style="left:628px;width:77px">Trip Revenue</div>
<div class="hc" style="left:705px;width:78px">Run Revenue</div>
<div class="hc" style="left:783px;width:82px">Total Revenue</div>
<div class="hc" style="left:865px;width:77px">Rev. Per Mile</div>
</div>
<div class="vs" style="left:931px;top:25px;height:150px">
<div class="ar u" style="left:5px;top:6px"></div>
<div class="ar d" style="left:5px;top:140px"></div>
<div class="thv" style="top:17px;height:60px"><div class="gv" style="top:25px"></div></div>
</div>
<div class="hs" style="left:6px;top:175px;width:925px">
<div class="ar l" style="left:5px;top:5px"></div>
<div class="ar r" style="left:914px;top:5px"></div>
<div class="thh" style="left:17px;width:596px"><div class="gh" style="left:294px"></div></div>
</div>
</div>
<div class="ttl" style="left:951px;top:503px;letter-spacing:-0.18px">Vehicle Groups</div>
<div class="grid" style="left:951px;top:524px;width:950px;height:194px">
<div class="abs" style="left:0;top:25px;width:949px;height:167px;overflow:hidden">
</div>
<div class="hdr" style="width:949px">
<div class="rh" style="width:6px"></div>
<div class="hc" style="left:6px;width:27px;padding:0"><svg class="abs" style="left:6px;top:4px" width="16" height="16" viewBox="0 0 16 16"><rect x="0" y="0" width="16" height="16" fill="url(#xg)"/><rect x="1" y="1" width="14" height="14" fill="url(#xr)"/><rect x="2" y="2" width="12" height="12" fill="url(#xw)"/><path d="M9.4 4 H12 V6.2 L7.4 10.8 H4 V9.4 Z" fill="#2b8a35"/><path d="M4 4 H6.6 L12 9.4 V12 H9.2 L4 6.4 Z" fill="#4aa24c"/><path d="M4.8 4.6 L11.2 11.2" stroke="#86c886" stroke-width="0.9"/></svg></div>
<div class="hc" style="left:33px;width:83px">Vehicle Group</div>
<div class="hc" style="left:116px;width:33px">Trips</div>
<div class="hc" style="left:149px;width:65px">Performed</div>
<div class="hc" style="left:214px;width:80px">Unperformed</div>
<div class="hc" style="left:294px;width:98px">Advance Cancels</div>
<div class="hc" style="left:392px;width:84px">Driver Cancels</div>
<div class="hc" style="left:476px;width:76px">Trip Revenue</div>
<div class="hc" style="left:552px;width:77px">Rev. Per Mile</div>
<div class="hc" style="left:629px;width:119px">Rev. Per Loaded Mile</div>
<div class="hc" style="left:748px;width:66px">Total Miles</div>
<div class="hc" style="left:814px;width:79px">Loaded Miles</div>
<div class="hc" style="left:893px;width:76px">Empty Miles</div>
</div>
</div>
<div class="ttl" style="left:1px;top:722px;letter-spacing:-0.39px">Drivers By Run</div>
<div class="grid" style="left:1px;top:742px;width:950px;height:195px">
<div class="abs" style="left:0;top:25px;width:948px;height:151px;overflow:hidden">
<div class="row alt" style="top:0px;width:1001px"><div class="rhc" style="width:6px"></div>
<div class="c" style="left:6px;width:53px"></div>
<div class="c" style="left:59px;width:91px">thomas, scott2</div>
<div class="c" style="left:150px;width:33px">60</div>
<div class="c" style="left:183px;width:64px">0</div>
<div class="c" style="left:247px;width:81px">60</div>
<div class="c" style="left:328px;width:97px">0</div>
<div class="c" style="left:425px;width:84px">0</div>
<div class="c" style="left:509px;width:77px">40044.90</div>
<div class="c" style="left:586px;width:77px">11.82</div>
<div class="c" style="left:663px;width:119px">31.54</div>
<div class="c" style="left:782px;width:65px">3388.90</div>
<div class="c" style="left:847px;width:80px">1269.76</div>
<div class="c" style="left:927px;width:75px">2119.14</div>
</div>
<div class="row" style="top:18px;width:1001px"><div class="rhc" style="width:6px"></div>
<div class="c" style="left:6px;width:53px"></div>
<div class="c" style="left:59px;width:91px">thomas, st22</div>
<div class="c" style="left:150px;width:33px">27</div>
<div class="c" style="left:183px;width:64px">0</div>
<div class="c" style="left:247px;width:81px">27</div>
<div class="c" style="left:328px;width:97px">0</div>
<div class="c" style="left:425px;width:84px">0</div>
<div class="c" style="left:509px;width:77px">2951.12</div>
<div class="c" style="left:586px;width:77px">1.96</div>
<div class="c" style="left:663px;width:119px">16.16</div>
<div class="c" style="left:782px;width:65px">1505.21</div>
<div class="c" style="left:847px;width:80px">182.60</div>
<div class="c" style="left:927px;width:75px">1322.61</div>
</div>
<div class="row alt" style="top:36px;width:1001px"><div class="rhc" style="width:6px"></div>
<div class="c" style="left:6px;width:53px"></div>
<div class="c" style="left:59px;width:91px">Thomas, SR</div>
<div class="c" style="left:150px;width:33px">105</div>
<div class="c" style="left:183px;width:64px">0</div>
<div class="c" style="left:247px;width:81px">105</div>
<div class="c" style="left:328px;width:97px">0</div>
<div class="c" style="left:425px;width:84px">0</div>
<div class="c" style="left:509px;width:77px">41697.82</div>
<div class="c" style="left:586px;width:77px">14.99</div>
<div class="c" style="left:663px;width:119px">24.02</div>
<div class="c" style="left:782px;width:65px">2781.75</div>
<div class="c" style="left:847px;width:80px">1735.77</div>
<div class="c" style="left:927px;width:75px">1045.98</div>
</div>
<div class="row" style="top:54px;width:1001px"><div class="rhc" style="width:6px"></div>
<div class="c" style="left:6px;width:53px"></div>
<div class="c" style="left:59px;width:91px">B, Ally</div>
<div class="c" style="left:150px;width:33px">2</div>
<div class="c" style="left:183px;width:64px">0</div>
<div class="c" style="left:247px;width:81px">2</div>
<div class="c" style="left:328px;width:97px">0</div>
<div class="c" style="left:425px;width:84px">0</div>
<div class="c" style="left:509px;width:77px">35.30</div>
<div class="c" style="left:586px;width:77px">0.06</div>
<div class="c" style="left:663px;width:119px">220.62</div>
<div class="c" style="left:782px;width:65px">598.20</div>
<div class="c" style="left:847px;width:80px">0.16</div>
<div class="c" style="left:927px;width:75px">598.04</div>
</div>
<div class="row alt" style="top:72px;width:1001px"><div class="rhc" style="width:6px"></div>
<div class="c" style="left:6px;width:53px"></div>
<div class="c" style="left:59px;width:91px">Brown, Amanda</div>
<div class="c" style="left:150px;width:33px">1</div>
<div class="c" style="left:183px;width:64px">0</div>
<div class="c" style="left:247px;width:81px">1</div>
<div class="c" style="left:328px;width:97px">0</div>
<div class="c" style="left:425px;width:84px">0</div>
<div class="c" style="left:509px;width:77px">20.0</div>
<div class="c" style="left:586px;width:77px">0.12</div>
<div class="c" style="left:663px;width:119px">0.67</div>
<div class="c" style="left:782px;width:65px">171.24</div>
<div class="c" style="left:847px;width:80px">29.92</div>
<div class="c" style="left:927px;width:75px">141.32</div>
</div>
</div>
<div class="hdr" style="width:948px">
<div class="rh" style="width:6px"></div>
<div class="hc" style="left:6px;width:53px;padding:0"><svg class="abs" style="left:12px;top:4px" width="16" height="16" viewBox="0 0 16 16"><rect x="0" y="0" width="16" height="16" fill="url(#xg)"/><rect x="1" y="1" width="14" height="14" fill="url(#xr)"/><rect x="2" y="2" width="12" height="12" fill="url(#xw)"/><path d="M9.4 4 H12 V6.2 L7.4 10.8 H4 V9.4 Z" fill="#2b8a35"/><path d="M4 4 H6.6 L12 9.4 V12 H9.2 L4 6.4 Z" fill="#4aa24c"/><path d="M4.8 4.6 L11.2 11.2" stroke="#86c886" stroke-width="0.9"/></svg></div>
<div class="hc" style="left:59px;width:91px">Driver</div>
<div class="hc" style="left:150px;width:33px">Trips</div>
<div class="hc" style="left:183px;width:64px">Performed</div>
<div class="hc" style="left:247px;width:81px">Unperformed</div>
<div class="hc" style="left:328px;width:97px">Advance Cancels</div>
<div class="hc" style="left:425px;width:84px">Driver Cancels</div>
<div class="hc" style="left:509px;width:77px">Trip Revenue</div>
<div class="hc" style="left:586px;width:77px">Rev. Per Mile</div>
<div class="hc" style="left:663px;width:119px">Rev. Per Loaded Mile</div>
<div class="hc" style="left:782px;width:65px">Total Miles</div>
<div class="hc" style="left:847px;width:80px">Loaded Miles</div>
<div class="hc" style="left:927px;width:75px">Empty Miles</div>
</div>
<div class="hs" style="left:6px;top:176px;width:942px">
<div class="ar l" style="left:5px;top:5px"></div>
<div class="ar r" style="left:931px;top:5px"></div>
<div class="thh" style="left:17px;width:774px"><div class="gh" style="left:383px"></div></div>
</div>
</div>
<div class="ttl" style="left:951px;top:722px;letter-spacing:-0.40px">By Vehicle</div>
<div class="grid" style="left:951px;top:742px;width:950px;height:195px">
<div class="abs" style="left:0;top:25px;width:931px;height:151px;overflow:hidden">
<div class="row" style="top:0px;width:938px"><div class="rhc" style="width:6px"></div>
<div class="c" style="left:6px;width:53px"></div>
<div class="c" style="left:59px;width:103px">Armoured Truck</div>
<div class="c" style="left:162px;width:33px">20</div>
<div class="c" style="left:195px;width:65px">0</div>
<div class="c" style="left:260px;width:80px">20</div>
<div class="c" style="left:340px;width:97px">0</div>
<div class="c" style="left:437px;width:85px">0</div>
<div class="c" style="left:522px;width:76px">7504.68</div>
<div class="c" style="left:598px;width:77px">11.23</div>
<div class="c" style="left:675px;width:119px">17.40</div>
<div class="c" style="left:794px;width:65px">668.35</div>
<div class="c" style="left:859px;width:80px">431.42</div>
</div>
<div class="row alt" style="top:18px;width:938px"><div class="rhc" style="width:6px"></div>
<div class="c" style="left:6px;width:53px"></div>
<div class="c" style="left:59px;width:103px">001</div>
<div class="c" style="left:162px;width:33px">24</div>
<div class="c" style="left:195px;width:65px">0</div>
<div class="c" style="left:260px;width:80px">24</div>
<div class="c" style="left:340px;width:97px">0</div>
<div class="c" style="left:437px;width:85px">0</div>
<div class="c" style="left:522px;width:76px">18732.08</div>
<div class="c" style="left:598px;width:77px">18.76</div>
<div class="c" style="left:675px;width:119px">27.57</div>
<div class="c" style="left:794px;width:65px">998.30</div>
<div class="c" style="left:859px;width:80px">679.33</div>
</div>
<div class="row" style="top:36px;width:938px"><div class="rhc" style="width:6px"></div>
<div class="c" style="left:6px;width:53px"></div>
<div class="c" style="left:59px;width:103px">new test 27648</div>
<div class="c" style="left:162px;width:33px">34</div>
<div class="c" style="left:195px;width:65px">0</div>
<div class="c" style="left:260px;width:80px">34</div>
<div class="c" style="left:340px;width:97px">0</div>
<div class="c" style="left:437px;width:85px">0</div>
<div class="c" style="left:522px;width:76px">11069.41</div>
<div class="c" style="left:598px;width:77px">14.41</div>
<div class="c" style="left:675px;width:119px">28.91</div>
<div class="c" style="left:794px;width:65px">768.22</div>
<div class="c" style="left:859px;width:80px">382.87</div>
</div>
<div class="row alt" style="top:54px;width:938px"><div class="rhc" style="width:6px"></div>
<div class="c" style="left:6px;width:53px"></div>
<div class="c" style="left:59px;width:103px">Red Caravan</div>
<div class="c" style="left:162px;width:33px">27</div>
<div class="c" style="left:195px;width:65px">0</div>
<div class="c" style="left:260px;width:80px">27</div>
<div class="c" style="left:340px;width:97px">0</div>
<div class="c" style="left:437px;width:85px">0</div>
<div class="c" style="left:522px;width:76px">2951.12</div>
<div class="c" style="left:598px;width:77px">1.96</div>
<div class="c" style="left:675px;width:119px">16.16</div>
<div class="c" style="left:794px;width:65px">1505.21</div>
<div class="c" style="left:859px;width:80px">182.60</div>
</div>
<div class="row" style="top:72px;width:938px"><div class="rhc" style="width:6px"></div>
<div class="c" style="left:6px;width:53px"></div>
<div class="c" style="left:59px;width:103px">Jeep</div>
<div class="c" style="left:162px;width:33px">47</div>
<div class="c" style="left:195px;width:65px">0</div>
<div class="c" style="left:260px;width:80px">47</div>
<div class="c" style="left:340px;width:97px">0</div>
<div class="c" style="left:437px;width:85px">0</div>
<div class="c" style="left:522px;width:76px">22191.74</div>
<div class="c" style="left:598px;width:77px">16.51</div>
<div class="c" style="left:675px;width:119px">24.75</div>
<div class="c" style="left:794px;width:65px">1344.31</div>
<div class="c" style="left:859px;width:80px">896.73</div>
</div>
<div class="row alt" style="top:90px;width:938px"><div class="rhc" style="width:6px"></div>
<div class="c" style="left:6px;width:53px"></div>
<div class="c" style="left:59px;width:103px">Scott</div>
<div class="c" style="left:162px;width:33px">45</div>
<div class="c" style="left:195px;width:65px">0</div>
<div class="c" style="left:260px;width:80px">45</div>
<div class="c" style="left:340px;width:97px">0</div>
<div class="c" style="left:437px;width:85px">0</div>
<div class="c" style="left:522px;width:76px">13963.46</div>
<div class="c" style="left:598px;width:77px">9.86</div>
<div class="c" style="left:675px;width:119px">17.26</div>
<div class="c" style="left:794px;width:65px">1416.31</div>
<div class="c" style="left:859px;width:80px">808.86</div>
</div>
<div class="row" style="top:108px;width:938px"><div class="rhc" style="width:6px"></div>
<div class="c" style="left:6px;width:53px"></div>
<div class="c" style="left:59px;width:103px">scott 2</div>
<div class="c" style="left:162px;width:33px">21</div>
<div class="c" style="left:195px;width:65px">0</div>
<div class="c" style="left:260px;width:80px">21</div>
<div class="c" style="left:340px;width:97px">0</div>
<div class="c" style="left:437px;width:85px">0</div>
<div class="c" style="left:522px;width:76px">10044.03</div>
<div class="c" style="left:598px;width:77px">8.11</div>
<div class="c" style="left:675px;width:119px">19.80</div>
<div class="c" style="left:794px;width:65px">1238.93</div>
<div class="c" style="left:859px;width:80px">507.29</div>
</div>
<div class="row alt" style="top:126px;width:938px"><div class="rhc" style="width:6px"></div>
<div class="c" style="left:6px;width:53px"></div>
<div class="c" style="left:59px;width:103px">wizard 2</div>
<div class="c" style="left:162px;width:33px">88</div>
<div class="c" style="left:195px;width:65px">0</div>
<div class="c" style="left:260px;width:80px">88</div>
<div class="c" style="left:340px;width:97px">0</div>
<div class="c" style="left:437px;width:85px">0</div>
<div class="c" style="left:522px;width:76px">45556.60</div>
<div class="c" style="left:598px;width:77px">20.65</div>
<div class="c" style="left:675px;width:119px">28.49</div>
<div class="c" style="left:794px;width:65px">2205.86</div>
<div class="c" style="left:859px;width:80px">1598.81</div>
</div>
<div class="row" style="top:144px;width:938px"><div class="rhc" style="width:6px"></div>
<div class="c" style="left:6px;width:53px"></div>
<div class="c" style="left:59px;width:103px">Ally</div>
<div class="c" style="left:162px;width:33px">2</div>
<div class="c" style="left:195px;width:65px">0</div>
<div class="c" style="left:260px;width:80px">2</div>
<div class="c" style="left:340px;width:97px">0</div>
<div class="c" style="left:437px;width:85px">0</div>
<div class="c" style="left:522px;width:76px">35.30</div>
<div class="c" style="left:598px;width:77px">0.06</div>
<div class="c" style="left:675px;width:119px">220.62</div>
<div class="c" style="left:794px;width:65px">598.20</div>
<div class="c" style="left:859px;width:80px">0.16</div>
</div>
</div>
<div class="hdr" style="width:931px">
<div class="rh" style="width:6px"></div>
<div class="hc" style="left:6px;width:53px;padding:0"><svg class="abs" style="left:12px;top:4px" width="16" height="16" viewBox="0 0 16 16"><rect x="0" y="0" width="16" height="16" fill="url(#xg)"/><rect x="1" y="1" width="14" height="14" fill="url(#xr)"/><rect x="2" y="2" width="12" height="12" fill="url(#xw)"/><path d="M9.4 4 H12 V6.2 L7.4 10.8 H4 V9.4 Z" fill="#2b8a35"/><path d="M4 4 H6.6 L12 9.4 V12 H9.2 L4 6.4 Z" fill="#4aa24c"/><path d="M4.8 4.6 L11.2 11.2" stroke="#86c886" stroke-width="0.9"/></svg></div>
<div class="hc" style="left:59px;width:103px">Vehicle</div>
<div class="hc" style="left:162px;width:33px">Trips</div>
<div class="hc" style="left:195px;width:65px">Performed</div>
<div class="hc" style="left:260px;width:80px">Unperformed</div>
<div class="hc" style="left:340px;width:97px">Advance Cancels</div>
<div class="hc" style="left:437px;width:85px">Driver Cancels</div>
<div class="hc" style="left:522px;width:76px">Trip Revenue</div>
<div class="hc" style="left:598px;width:77px">Rev. Per Mile</div>
<div class="hc" style="left:675px;width:119px">Rev. Per Loaded Mile</div>
<div class="hc" style="left:794px;width:65px">Total Miles</div>
<div class="hc" style="left:859px;width:80px">Loaded Miles</div>
</div>
<div class="vs" style="left:931px;top:25px;height:151px">
<div class="ar u" style="left:5px;top:6px"></div>
<div class="ar d" style="left:5px;top:141px"></div>
<div class="thv" style="top:43px;height:64px"><div class="gv" style="top:27px"></div></div>
</div>
<div class="hs" style="left:6px;top:176px;width:925px">
<div class="ar l" style="left:5px;top:5px"></div>
<div class="ar r" style="left:914px;top:5px"></div>
<div class="thh" style="left:17px;width:738px"><div class="gh" style="left:365px"></div></div>
</div>
</div>
<div class="abs" style="left:0;top:940px;width:1895px;height:1px;background:#9a9da2"></div>
<svg class="abs" style="left:0;top:0;pointer-events:none" width="1895" height="943" viewBox="0 0 1895 943">
<rect x="297.1" y="124.6" width="235.1" height="32.9" fill="none" stroke="#27df13" stroke-width="5"/>
<rect x="939.6" y="708.7" width="134.8" height="66" fill="none" stroke="#27df13" stroke-width="5"/>
<path d="M1250.3 17.6 H1255 V124 H1265.5 L1252.6 149.6 L1240 124 H1250.3 Z" fill="#e31b1b"/>
<path d="M984.2 568.6 H988.8 V680 H998.3 L985.8 705.6 L973 680 H984.2 Z" fill="#e31b1b"/>
</svg>
</body></html>
